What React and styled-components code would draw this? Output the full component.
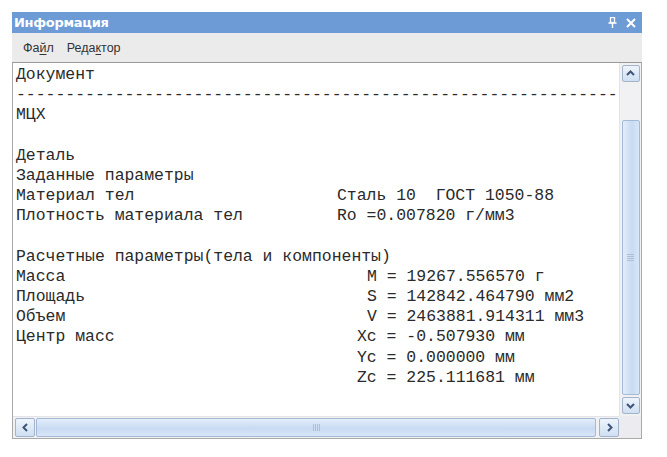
import React from "react"
import styled, { createGlobalStyle } from "styled-components"

const GlobalStyle = createGlobalStyle`
  html, body {
    margin: 0;
    padding: 0;
    background: #ffffff;
  }
  body {
    font-family: "Liberation Sans", Arial, sans-serif;
  }
`

const Window = styled.div`
  margin: 12px 0 0 12px;
  width: 630px;
  display: flex;
  flex-direction: column;
`

const TitleBar = styled.div`
  height: 21px;
  background: #6c9bd6;
  display: flex;
  align-items: center;
  justify-content: space-between;
  padding: 0 6px 0 2px;
  color: #ffffff;
  font-weight: bold;
  font-size: 13px;
  font-family: "DejaVu Sans", Verdana, sans-serif;
  letter-spacing: -0.3px;
`

const TitleButtons = styled.div`
  display: flex;
  align-items: center;
  gap: 9px;
`

const MenuBar = styled.div`
  height: 29px;
  background: #ebebeb;
  display: flex;
  align-items: center;
  gap: 13px;
  padding-left: 11px;
  font-size: 12.5px;
  color: #333333;
`

const MenuItem = styled.span`
  u {
    text-decoration: underline;
    text-underline-offset: 2px;
  }
`

const Frame = styled.div`
  height: 375px;
  border: 1px solid #a9a9a9;
  border-top-color: #9a9a9a;
  background: #ffffff;
  display: grid;
  grid-template-columns: 1fr 22px;
  grid-template-rows: 1fr 22px;
`

const TextArea = styled.div`
  overflow: hidden;
  padding: 2px 0 0 3px;
  font-family: "Liberation Mono", "Courier New", monospace;
  font-size: 16.45px;
  line-height: 20.2px;
  color: #2a2a2a;
  white-space: pre;
`

const Line = styled.div`
  height: 20.2px;
`

const Row = styled.div`
  height: 20.2px;
  display: grid;
  grid-template-columns: ${p => p.$col}px auto;
`

const VTrack = styled.div`
  background: #f1f1f3;
  border-left: 1px solid #e4e4e8;
  display: flex;
  flex-direction: column;
  align-items: center;
  padding: 2px 0 0;
`

const HTrack = styled.div`
  background: #f1f1f3;
  border-top: 1px solid #e4e4e8;
  display: flex;
  align-items: center;
  padding-left: 2px;
`

const Corner = styled.div`
  background: #ecebef;
`

const ArrowButton = styled.div`
  width: ${p => (p.$vertical ? "18px" : "20px")};
  height: ${p => (p.$vertical ? "17px" : "19px")};
  box-sizing: border-box;
  border: 1px solid #a3b4ca;
  border-radius: 2px;
  background: linear-gradient(#eef4fc, #cfdff2);
  display: flex;
  align-items: center;
  justify-content: center;
  flex-shrink: 0;
`

const VThumb = styled.div`
  width: 18px;
  margin-top: ${p => p.$gap}px;
  height: ${p => p.$size}px;
  box-sizing: border-box;
  border: 1px solid #a4b9d6;
  border-radius: 2px;
  background: linear-gradient(90deg, #e3edfa, #c8dbf3 55%, #d8e5f6);
  display: flex;
  align-items: center;
  justify-content: center;
  margin-bottom: 2px;
`

const HThumb = styled.div`
  height: 19px;
  flex: 1;
  margin: 0 3px 0 1px;
  box-sizing: border-box;
  border: 1px solid #a4b9d6;
  border-radius: 2px;
  background: linear-gradient(#e3edfa, #c8dbf3 55%, #d8e5f6);
  display: flex;
  align-items: center;
  justify-content: center;
`

const Grip = styled.div`
  display: flex;
  flex-direction: ${p => (p.$vertical ? "column" : "row")};
  gap: 1px;
  span {
    display: block;
    background: #aebfd6;
    width: ${p => (p.$vertical ? "7px" : "1px")};
    height: ${p => (p.$vertical ? "1px" : "7px")};
  }
`

const Chevron = ({ dir }) => {
  const pts = {
    up: "2,7 5.5,3.5 9,7",
    down: "2,4 5.5,7.5 9,4",
    left: "7,2 3.5,5.5 7,9",
    right: "4,2 7.5,5.5 4,9",
  }[dir]
  return (
    <svg width="11" height="11" viewBox="0 0 11 11">
      <polyline points={pts} fill="none" stroke="#3f5578" strokeWidth="2" />
    </svg>
  )
}

const PinIcon = () => (
  <svg width="9" height="11" viewBox="0 0 9 11">
    <rect x="2.5" y="0.5" width="4" height="5" fill="none" stroke="#fff" strokeWidth="1.3" />
    <line x1="0.5" y1="6" x2="8.5" y2="6" stroke="#fff" strokeWidth="1.6" />
    <line x1="4.5" y1="6" x2="4.5" y2="11" stroke="#fff" strokeWidth="1.4" />
  </svg>
)

const CloseIcon = () => (
  <svg width="10" height="10" viewBox="0 0 10 10">
    <path d="M1 1 L9 9 M9 1 L1 9" stroke="#fff" strokeWidth="2" />
  </svg>
)

const dashes = "-".repeat(61)

const lines = [
  { text: "Документ" },
  { text: dashes },
  { text: "МЦХ" },
  { text: "" },
  { text: "Деталь" },
  { text: "Заданные параметры" },
  { label: "Материал тел", value: "Сталь 10  ГОСТ 1050-88", col: 321 },
  { label: "Плотность материала тел", value: "Ro =0.007820 г/мм3", col: 321 },
  { text: "" },
  { text: "Расчетные параметры(тела и компоненты)" },
  { label: "Масса", value: "M = 19267.556570 г", col: 351 },
  { label: "Площадь", value: "S = 142842.464790 мм2", col: 351 },
  { label: "Объем", value: "V = 2463881.914311 мм3", col: 351 },
  { label: "Центр масс", value: "Xc = -0.507930 мм", col: 341 },
  { label: "", value: "Yc = 0.000000 мм", col: 341 },
  { label: "", value: "Zc = 225.111681 мм", col: 341 },
]

export default function App() {
  return (
    <>
      <GlobalStyle />
      <Window>
        <TitleBar>
          <span>Информация</span>
          <TitleButtons>
            <PinIcon />
            <CloseIcon />
          </TitleButtons>
        </TitleBar>
        <MenuBar>
          <MenuItem>
            Фа<u>й</u>л
          </MenuItem>
          <MenuItem>
            Реда<u>к</u>тор
          </MenuItem>
        </MenuBar>
        <Frame>
          <TextArea>
            {lines.map((l, i) =>
              l.value ? (
                <Row key={i} $col={l.col}>
                  <span>{l.label}</span>
                  <span>{l.value}</span>
                </Row>
              ) : (
                <Line key={i}>{l.text}</Line>
              )
            )}
          </TextArea>
          <VTrack>
            <ArrowButton $vertical>
              <Chevron dir="up" />
            </ArrowButton>
            <VThumb $gap={38} $size={275}>
              <Grip $vertical>
                <span />
                <span />
                <span />
                <span />
              </Grip>
            </VThumb>
            <ArrowButton $vertical>
              <Chevron dir="down" />
            </ArrowButton>
          </VTrack>
          <HTrack>
            <ArrowButton>
              <Chevron dir="left" />
            </ArrowButton>
            <HThumb>
              <Grip>
                <span />
                <span />
                <span />
                <span />
              </Grip>
            </HThumb>
            <ArrowButton>
              <Chevron dir="right" />
            </ArrowButton>
          </HTrack>
          <Corner />
        </Frame>
      </Window>
    </>
  )
}
